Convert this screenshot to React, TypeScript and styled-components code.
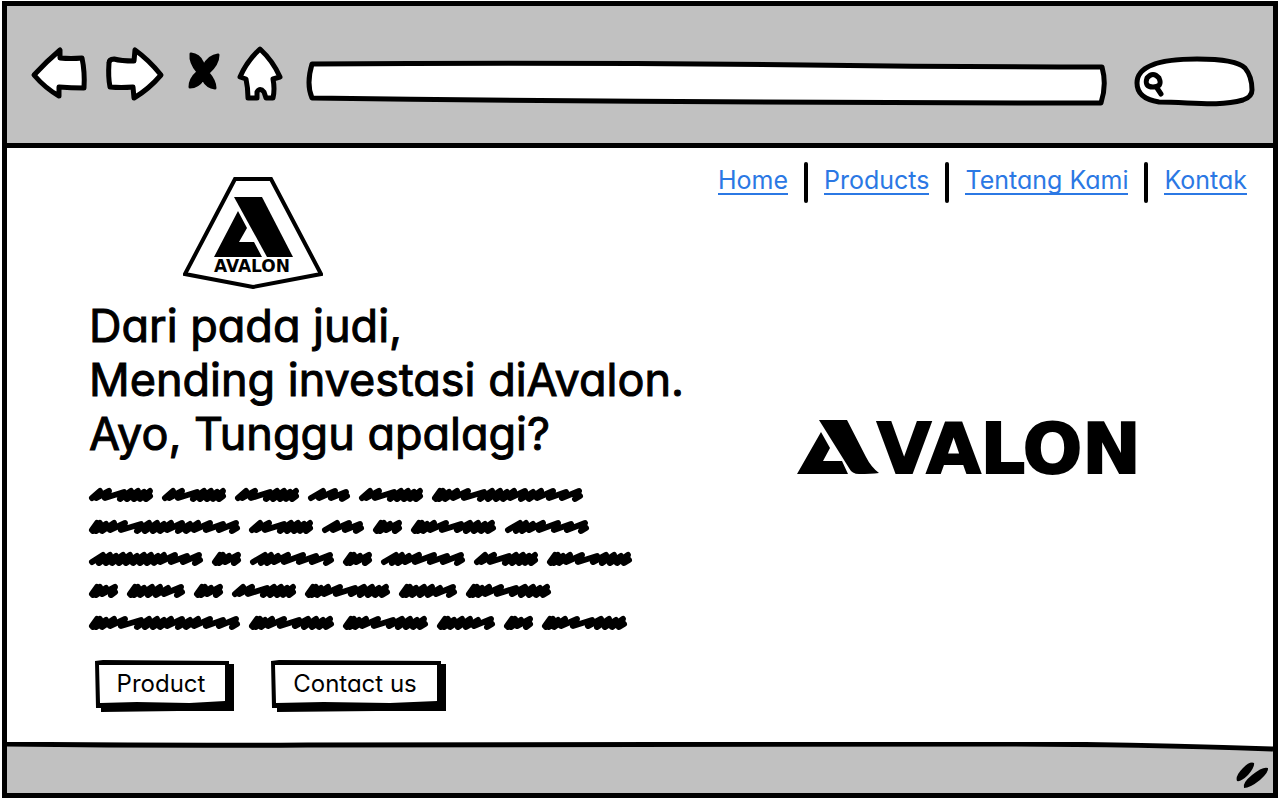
import React from "react";
import styled, { createGlobalStyle } from "styled-components";

const ink = "#000";
const chrome = "#c1c1c1";
const link = "#2b78e4";

const GlobalStyle = createGlobalStyle`
  * { box-sizing: border-box; }
  body {
    margin: 0;
    background: #fff;
    color: ${ink};
    font-family: Inter, "Noto Sans", sans-serif;
    font-feature-settings: "cv11" 1;
  }
`;

const Frame = styled.div`
  display: flex;
  flex-direction: column;
  min-height: calc(100vh - 3px);
  margin: 1px 2px 2px;
  border: 5px solid ${ink};
`;

const Toolbar = styled.header`
  display: flex;
  gap: 16px;
  height: 142px;
  padding: 39px 18px 0 24px;
  background: ${chrome};
  border-bottom: 5px solid ${ink};
`;

const IconButton = styled.button<{ $width: number }>`
  flex: none;
  width: ${(p) => p.$width}px;
  height: 60px;
  padding: 0;
  border: 0;
  background: none;
  cursor: pointer;
`;

const Sketch = styled.svg`
  display: block;
  overflow: visible;
  fill: #fff;
  stroke: ${ink};
  stroke-width: 5px;
  stroke-linejoin: round;
  stroke-linecap: round;
`;

const SolidSketch = styled(Sketch)`
  fill: ${ink};
  stroke-width: 3px;
`;

const Outline = styled(Sketch)`
  position: absolute;
  inset: 0;
  width: 100%;
  height: 100%;
`;

const Field = styled.label`
  position: relative;
  flex: 1;
  height: 46px;
  margin-top: 15px;
`;

const SearchField = styled(Field)`
  flex: none;
  width: 121px;
  height: 51px;
  margin: 11px 0 0 12px;
`;

const TextInput = styled.input<{ $inset: number }>`
  position: relative;
  width: 100%;
  height: 100%;
  padding: 0 16px 0 ${(p) => p.$inset}px;
  border: 0;
  outline: 0;
  background: none;
  font: inherit;
  font-size: 20px;
`;

const Page = styled.main`
  flex: 1;
  display: grid;
  grid-template-columns: 1fr auto;
  align-items: start;
  padding: 0 26px 0 82px;
`;

const Intro = styled.section`
  padding: 29px 0 24px;
`;

const Shield = styled.svg`
  display: block;
  margin-left: 94px;
`;

const Title = styled.h1`
  margin: 10px 0 18px;
  font-size: 45px;
  line-height: 54px;
  font-weight: 400;
  -webkit-text-stroke: 1px ${ink};
`;

const Line = styled.div`
  display: flex;
  align-items: center;
  gap: 9px;
  height: 32px;
`;

const Squiggle = styled(Sketch)`
  flex: none;
  fill: none;
  stroke-width: 6px;
`;

const Actions = styled.div`
  display: flex;
  gap: 37px;
  padding: 21px 0 0 6px;
`;

const SketchButton = styled.button<{ $width: number }>`
  position: relative;
  width: ${(p) => p.$width}px;
  height: 52px;
  padding: 0 7px 5px 0;
  border: 0;
  background: none;
  color: ${ink};
  font: inherit;
  font-size: 24px;
  cursor: pointer;
`;

const ButtonShape = styled.svg`
  position: absolute;
  inset: 0;
`;

const ButtonText = styled.span`
  position: relative;
`;

const Aside = styled.section`
  display: flex;
  flex-direction: column;
  align-items: center;
  gap: 202px;
  padding-top: 14px;
`;

const Nav = styled.nav`
  display: flex;
  align-items: flex-start;
  gap: 16px;
`;

const NavLink = styled.a`
  margin-top: 5px;
  border-bottom: 2px solid ${link};
  color: ${link};
  font-size: 25px;
  line-height: 26px;
  text-decoration: none;
`;

const Separator = styled.span`
  width: 4px;
  height: 41px;
  border-radius: 2px;
  background: ${ink};
`;

const StatusBar = styled.footer`
  position: relative;
  display: flex;
  justify-content: flex-end;
  height: 51px;
  padding: 18px 4px 0;
  background: ${chrome};
`;

const Edge = styled.svg`
  position: absolute;
  top: 0;
  left: 0;
  width: 100%;
  height: 12px;
`;

// Each squiggle is a width and the x position of every upward stroke in it.
const shapes: Record<string, [number, number[]]> = {
  iiimu: [64, [11, 20, 35, 42, 49, 55, 61]],
  sas: [42, [15, 27, 38]],
  mu: [29, [8, 11, 17, 26]],
  muasmu: [85, [8, 11, 16, 23, 35, 50, 59, 67, 74, 81]],
  smuas: [84, [15, 21, 28, 38, 53, 66, 80]],
  mumumui: [114, [14, 21, 27, 34, 41, 48, 55, 62, 69, 75, 86, 98, 110]],
  mums: [58, [8, 11, 17, 25, 33, 41, 54]],
  long: [151, [8, 11, 17, 25, 36, 52, 60, 68, 75, 82, 93, 101, 109, 121, 134, 147]],
};

const copy = [
  "iiimu iiimu iiimu sas iiimu long",
  "long iiimu sas mu muasmu smuas",
  "mumumui mu smuas mu smuas iiimu muasmu",
  "mu mums mu iiimu muasmu mums muasmu",
  "long muasmu muasmu mums mu muasmu",
];

function Word({ name }: { name: string }) {
  const [width, peaks] = shapes[name];
  const strokes = peaks.map((x, i) => {
    const next = peaks[i + 1] ?? width;
    const low = next - x < 9 ? 11 : 10;
    return `L${x} ${i % 3 === 2 ? 4 : 3}L${x - 4} ${low}`;
  });
  return (
    <Squiggle width={width} height={14} aria-hidden="true">
      <path d={`M3 10${strokes.join("")}L${width - 3} 8`} />
    </Squiggle>
  );
}

function Action({ width: w, children }: { width: number; children: string }) {
  return (
    <SketchButton $width={w} type="button">
      <ButtonShape width={w} height={52} aria-hidden="true">
        <path d={`M0 1L8 0L${w - 5} 1V4H${w}V51L${w * 0.6} 51L6 52V48H1Z`} />
        <path d={`M4 5L${w - 9} 5V41L${w * 0.68} 43L${w * 0.3} 42L5 43Z`} fill="#fff" />
      </ButtonShape>
      <ButtonText>{children}</ButtonText>
    </SketchButton>
  );
}

const pages = ["Home", "Products", "Tentang Kami", "Kontak"];

export default function App() {
  return (
    <>
      <GlobalStyle />
      <Frame>
        <Toolbar>
          <IconButton $width={58} type="button" aria-label="Back">
            <Sketch width={58} height={60}>
              <path d="M3 30Q16 16 29 5V13Q40 14 51 13Q54 27 53 43Q40 43 28 42V51Q14 43 3 30Z" />
            </Sketch>
          </IconButton>
          <IconButton $width={60} type="button" aria-label="Forward">
            <Sketch width={60} height={60}>
              <path d="M56 30Q44 15 30 5L29 16Q16 16 9 14Q4 14 4 18Q3 32 5 42Q16 43 28 42L29 53Q44 44 56 30Z" />
            </Sketch>
          </IconButton>
          <IconButton $width={40} type="button" aria-label="Stop">
            <SolidSketch width={40} height={60}>
              <path d="M10 9Q18 10 21 17L23 21Q28 11 37 10Q37 19 27 28Q34 36 34 43Q26 42 22 34Q17 42 9 42Q9 34 17 27Q9 18 10 9Z" />
            </SolidSketch>
          </IconButton>
          <IconButton $width={53} type="button" aria-label="Home page">
            <Sketch width={53} height={60}>
              <path d="M23 4Q36 16 43 32L36 34Q38 44 36 53H29L27 47Q23 42 20 47V53L11 53Q11 43 9 34L3 32Q10 16 23 4Z" />
            </Sketch>
          </IconButton>
          <Field>
            <Outline viewBox="0 0 800 46" preserveAspectRatio="none" aria-hidden="true">
              <path d="M6 4Q250 2 500 5Q650 7 796 7Q801 25 795 43Q400 43 6 38Q0 24 6 4Z" />
            </Outline>
            <TextInput $inset={16} type="text" aria-label="Address" />
          </Field>
          <SearchField>
            <Outline viewBox="0 0 121 51" aria-hidden="true">
              <path d="M3 27C3 11 24 3 63 3C85 3 104 5 111 12C116 18 118 25 118 34Q118 41 109 44C84 51 57 46 25 46C12 44 3 38 3 27Z" />
              <path d="M13 22Q19 15 25 22Q29 31 19 31Q10 31 13 22ZM23 32L27 38" />
            </Outline>
            <TextInput $inset={34} type="search" aria-label="Search" />
          </SearchField>
        </Toolbar>

        <Page>
          <Intro>
            <Shield width={140} height={112} role="img" aria-label="Avalon logo">
              <path d="M52 2H88L138 97L70 110L2 97Z" fill="none" stroke={ink} strokeWidth={4} />
              <path d="M51 20H79L110 80H84Z" />
              <path d="M55 34L64 51L56 65H71L79 80H31Z" />
              <text x="69" y="95" textAnchor="middle" fontFamily="DejaVu Sans" fontWeight="700" fontSize="17">
                AVALON
              </text>
            </Shield>
            <Title>
              Dari pada judi,
              <br />
              Mending investasi diAvalon.
              <br />
              Ayo, Tunggu apalagi?
            </Title>
            {copy.map((line, i) => (
              <Line key={i}>
                {line.split(" ").map((name, j) => (
                  <Word key={j} name={name} />
                ))}
              </Line>
            ))}
            <Actions>
              <Action width={139}>Product</Action>
              <Action width={175}>Contact us</Action>
            </Actions>
          </Intro>

          <Aside>
            <Nav>
              {pages.map((page, i) => (
                <React.Fragment key={page}>
                  {i > 0 && <Separator />}
                  <NavLink href="#">{page}</NavLink>
                </React.Fragment>
              ))}
            </Nav>
            <svg width={370} height={90} role="img" aria-label="Avalon">
              <path d="M22 15H50L69 52Q74 62 82 68Q74 69 62 69Q55 69 52 63Z" />
              <path d="M24 27L33 43L26 56H45L51 69H0Z" />
              <text x="80" y="68" fontFamily="DejaVu Sans" fontWeight="700" fontSize="70" stroke={ink} strokeWidth="2">
                VALON
              </text>
            </svg>
          </Aside>
        </Page>

        <StatusBar>
          <Edge viewBox="0 0 1266 12" preserveAspectRatio="none" aria-hidden="true">
            <path d="M0 0H1266V7Q1120 2 1000 2Q600 2 300 3L0 2Z" fill="#fff" />
            <path d="M0 2Q150 4 300 3Q600 2 1000 2Q1120 2 1266 7" fill="none" stroke={ink} strokeWidth={5} />
          </Edge>
          <svg width={34} height={30} aria-hidden="true">
            <path d="M2 21Q0 16 8 8Q15 1 19 3Q20 7 13 15Q6 22 2 21Z" />
            <path d="M9 28Q7 23 17 15Q28 6 33 8Q34 12 25 20Q15 28 9 28Z" />
          </svg>
        </StatusBar>
      </Frame>
    </>
  );
}
